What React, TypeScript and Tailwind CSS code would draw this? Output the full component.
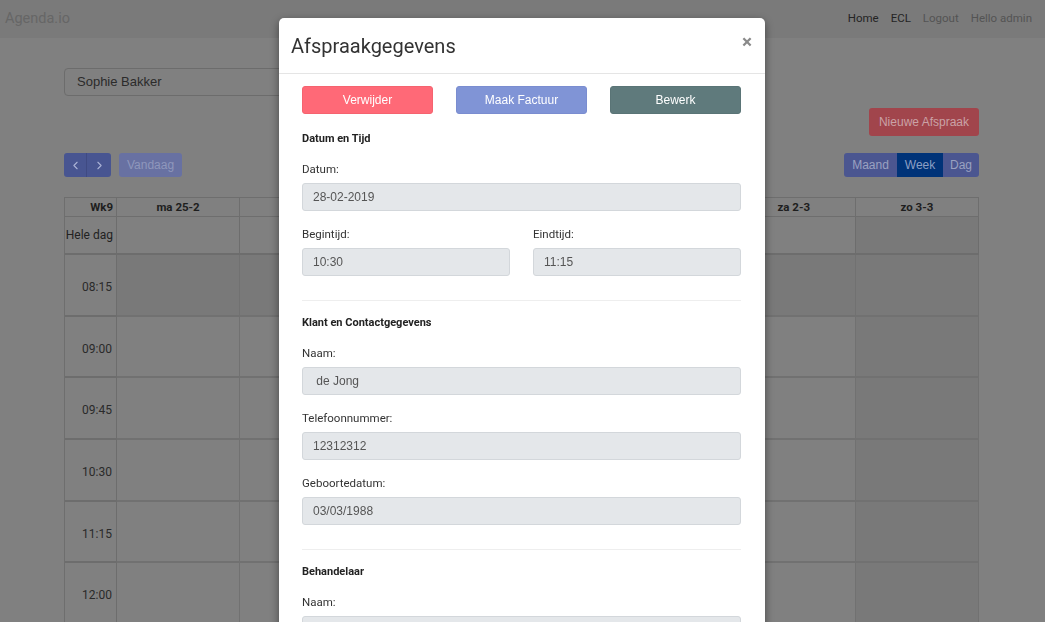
import { ChevronLeft, ChevronRight } from 'lucide-react'

const days = ['ma 25-2', 'di 26-2', 'wo 27-2', 'do 28-2', 'vr 1-3', 'za 2-3', 'zo 3-3']
const times = ['08:15', '09:00', '09:45', '10:30', '11:15', '12:00']

const gridRow = 'grid grid-cols-[52px_repeat(7,minmax(0,1fr))]'
const arial = "font-['Liberation_Sans',Arial,sans-serif]"

function Field({ label, value }: { label: string; value: string }) {
  return (
    <div>
      <div className="h-[16px] text-[11.5px] leading-[16px] text-[#333]">{label}</div>
      <div
        className={`mt-[6px] flex h-[28px] items-center rounded-[3px] border border-[#d3d7db] bg-[#e4e7ea] px-[10px] text-[12px] text-[#555] ${arial}`}
      >
        {value}
      </div>
    </div>
  )
}

function SectionTitle({ children }: { children: string }) {
  return <h4 className="h-[15px] text-[11px] font-bold leading-[15px] text-[#222]">{children}</h4>
}

function Calendar() {
  return (
    <div className="mt-[20px] border-l border-t border-[#6e6e6e] text-[#1e1e1e]">
      {/* header */}
      <div className={`${gridRow} h-[19px] text-[11.5px] font-bold leading-[18px]`}>
        <div className="border-b border-r border-[#6e6e6e] pr-[3px] text-right">Wk9</div>
        {days.map((d) => (
          <div key={d} className="border-b border-r border-[#6e6e6e] text-center">
            {d}
          </div>
        ))}
      </div>
      {/* all day */}
      <div className={`${gridRow} h-[38px]`}>
        <div className="flex items-center justify-end border-b-2 border-r border-[#6d6d6d] pr-[3px] text-[12px] text-[#222]">
          Hele dag
        </div>
        {days.map((d, i) => (
          <div
            key={d}
            className={`border-b-2 border-r border-[#6d6d6d] ${i === 6 ? 'bg-[#797979]' : 'bg-[#808080]'}`}
          />
        ))}
      </div>
      {times.map((t, r) => (
        <div key={t} className={`${gridRow} h-[61.7px]`}>
          <div className="flex items-center justify-end border-b-2 border-r border-[#6d6d6d] pr-[4px] pt-[4px] text-[12px] text-[#2a2a2a]">
            {t}
          </div>
          {days.map((d, i) => (
            <div
              key={d}
              className={`border-b-2 border-r border-[#717171] ${
                i === 6 || r === 0 ? 'bg-[#797979]' : 'bg-[#808080]'
              }`}
            />
          ))}
        </div>
      ))}
    </div>
  )
}

export default function App() {
  return (
    <div className="relative h-[622px] w-full overflow-hidden bg-[#808080] font-['Roboto',sans-serif]">
      {/* navbar */}
      <nav className="flex h-[38px] items-center justify-between bg-[#7a7a7a] pl-[5px] pr-[13px]">
        <span className="text-[14.5px] text-[#666]">Agenda.io</span>
        <div className="flex items-center gap-[12px] text-[11.5px]">
          <span className="text-[#242424]">Home</span>
          <span className="text-[#242424]">ECL</span>
          <span className="text-[#545454]">Logout</span>
          <span className="text-[#545454]">Hello admin</span>
        </div>
      </nav>

      <main className="ml-[64px] w-[915px]">
        <div
          className={`mt-[30px] flex h-[28px] w-[420px] items-center rounded-[4px] border border-[#6c6c6c] pl-[12px] text-[13px] text-[#2b2b2b] ${arial}`}
        >
          Sophie Bakker
        </div>

        <div className="mt-[12px] flex justify-end">
          <button
            className={`h-[28px] rounded-[3px] bg-[#a1454c] px-[10px] text-[12px] text-[#caa2a6] ${arial}`}
          >
            Nieuwe Afspraak
          </button>
        </div>

        <div className={`mt-[17px] flex h-[24px] items-stretch justify-between text-[12px] ${arial}`}>
          <div className="flex gap-[8px]">
            <div className="flex overflow-hidden rounded-[3px] bg-[#485591] text-[#aab2d6]">
              <span className="flex w-[23px] items-center justify-center border-r border-[#3f4a82]">
                <ChevronLeft size={13} strokeWidth={2} />
              </span>
              <span className="flex w-[24px] items-center justify-center">
                <ChevronRight size={13} strokeWidth={2} />
              </span>
            </div>
            <div className="flex w-[63px] items-center justify-center rounded-[3px] bg-[#6871a2] text-[#8f97bc]">
              Vandaag
            </div>
          </div>
          <div className="flex overflow-hidden rounded-[3px] bg-[#4b5690] text-[#9aa1c0]">
            <span className="flex w-[53px] items-center justify-center">Maand</span>
            <span className="flex w-[46px] items-center justify-center bg-[#003378] text-[#8c9fc4]">Week</span>
            <span className="flex w-[36px] items-center justify-center">Dag</span>
          </div>
        </div>

        <Calendar />
      </main>

      {/* modal */}
      <div className="fixed inset-0 flex justify-center pt-[18px]">
        <div className="mr-px h-[640px] w-[486px] rounded-[5px] bg-white shadow-[0_3px_9px_rgba(0,0,0,0.45)]">
          <div className="flex h-[56px] items-center justify-between border-b border-[#e5e5e5] pl-[12px] pr-[13px]">
            <h3 className="text-[20px] text-[#333]">Afspraakgegevens</h3>
            <span className="-mt-[9px] text-[19px] font-bold leading-none text-[#8a8a8a]">×</span>
          </div>

          <div className="pl-[23px] pr-[24px] pt-[12px]">
            <div className={`grid grid-cols-3 gap-[23px] text-[12px] text-white ${arial}`}>
              <button className="h-[28px] rounded-[3px] border border-[#f5636f] bg-[#ff6977]">Verwijder</button>
              <button className="h-[28px] rounded-[3px] border border-[#7a8dd0] bg-[#8094d6]">Maak Factuur</button>
              <button className="h-[28px] rounded-[3px] border border-[#5a7476] bg-[#5f7a7c]">Bewerk</button>
            </div>

            <div className="mt-[17px] flex flex-col gap-[15px]">
              <SectionTitle>Datum en Tijd</SectionTitle>
              <Field label="Datum:" value="28-02-2019" />
              <div className="grid grid-cols-2 gap-[23px]">
                <Field label="Begintijd:" value="10:30" />
                <Field label="Eindtijd:" value="11:15" />
              </div>
            </div>

            <div className="mt-[24px] h-px bg-[#eeeeee]" />

            <div className="mt-[14px] flex flex-col gap-[15px]">
              <SectionTitle>Klant en Contactgegevens</SectionTitle>
              <Field label="Naam:" value={'\u00a0de Jong'} />
              <Field label="Telefoonnummer:" value="12312312" />
              <Field label="Geboortedatum:" value="03/03/1988" />
            </div>

            <div className="mt-[24px] h-px bg-[#eeeeee]" />

            <div className="mt-[14px] flex flex-col gap-[15px]">
              <SectionTitle>Behandelaar</SectionTitle>
              <Field label="Naam:" value="" />
            </div>
          </div>
        </div>
      </div>
    </div>
  )
}
